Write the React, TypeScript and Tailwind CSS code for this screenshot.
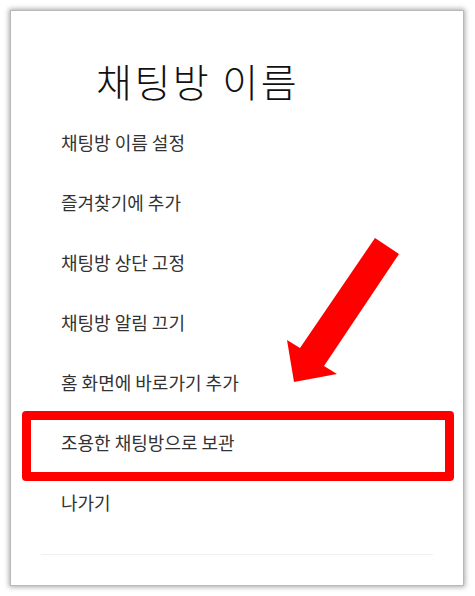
import React from "react";

const items = [
  "채팅방 이름 설정",
  "즐겨찾기에 추가",
  "채팅방 상단 고정",
  "채팅방 알림 끄기",
  "홈 화면에 바로가기 추가",
  "조용한 채팅방으로 보관",
  "나가기",
];

const HIGHLIGHT = 5;

export default function App() {
  return (
    <div
      className="relative w-[475px] h-[596px] bg-white p-[10px]"
      style={{ fontFamily: '"Noto Sans CJK KR", "Noto Sans", sans-serif' }}
    >
      <div className="w-[454px] h-[576px] border border-[#b9b9b9] bg-white shadow-[0_0_5px_1px_rgba(0,0,0,0.35)] flex flex-col">
        <div className="h-[101px] pl-[85px] pt-[50px]">
          <h1 className="text-[39px] leading-[38px] tracking-[2.5px] text-[#111] font-light">채팅방 이름</h1>
        </div>
        <ul className="flex flex-col">
          {items.map((label, i) => (
            <li key={label} className="relative h-[60px] flex items-center pl-[50px]">
              <span className="text-[18px] text-[#333]">{label}</span>
              {i === HIGHLIGHT && (
                <div className="absolute left-[11px] right-[9px] top-[-1px] bottom-[-9px] border-[9px] border-[#ff0000] rounded-[4px]" />
              )}
            </li>
          ))}
        </ul>
        <div className="mx-[30px] mt-[22px] h-px bg-[#f0f0f0]" />
      </div>
      <svg
        className="absolute inset-0 pointer-events-none"
        width="475"
        height="596"
        viewBox="0 0 475 596"
      >
        <polygon
          points="375,238 399,254 324,366 337,374 294,382 287,340 300,348"
          fill="#ff0000"
        />
      </svg>
    </div>
  );
}
